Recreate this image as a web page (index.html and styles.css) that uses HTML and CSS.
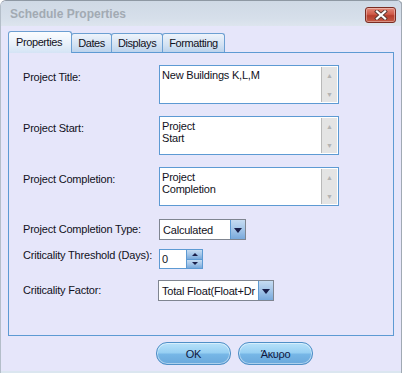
FILE: index.html
```html
<!DOCTYPE html>
<html lang="en">
<head>
  <meta charset="UTF-8">
  <title>Schedule Properties</title>
  <link rel="stylesheet" href="styles.css">
</head>
<body>
  <div class="janela">
    <div class="titulo">
      <span class="titulo-texto">Schedule Properties</span>
      <button class="fechar" title="Close">
        <svg width="16" height="10" viewBox="0 0 16 10">
          <path d="M4 1.5 L12 8.5 M12 1.5 L4 8.5" stroke="#5a3a34" stroke-width="4" stroke-linecap="square"/>
          <path d="M4 1.5 L12 8.5 M12 1.5 L4 8.5" stroke="#ffffff" stroke-width="2.2" stroke-linecap="square"/>
        </svg>
      </button>
    </div>

    <div class="cliente">
      <div class="abas">
        <div class="aba ativa">Properties</div>
        <div class="aba">Dates</div>
        <div class="aba">Displays</div>
        <div class="aba">Formatting</div>
      </div>

      <div class="painel">
        <div class="linha topo">
          <label>Project Title:</label>
          <div class="caixa">
            <div class="caixa-texto">New Buildings K,L,M</div>
            <div class="rolagem"><span>&#9650;</span><span>&#9660;</span></div>
          </div>
        </div>

        <div class="linha topo">
          <label>Project Start:</label>
          <div class="caixa">
            <div class="caixa-texto">Project<br>Start</div>
            <div class="rolagem"><span>&#9650;</span><span>&#9660;</span></div>
          </div>
        </div>

        <div class="linha topo">
          <label>Project Completion:</label>
          <div class="caixa">
            <div class="caixa-texto">Project<br>Completion</div>
            <div class="rolagem"><span>&#9650;</span><span>&#9660;</span></div>
          </div>
        </div>

        <div class="linha tipo">
          <label>Project Completion Type:</label>
          <div class="combo combo-curto">
            <span class="combo-texto">Calculated</span>
            <span class="seta"><i></i></span>
          </div>
        </div>

        <div class="linha limite">
          <label class="sobe">Criticality Threshold (Days):</label>
          <div class="spin">
            <span class="spin-valor">0</span>
            <span class="spin-botoes">
              <span class="spin-btn"><i class="cima"></i></span>
              <span class="spin-btn"><i class="baixo"></i></span>
            </span>
          </div>
        </div>

        <div class="linha fator">
          <label>Criticality Factor:</label>
          <div class="combo combo-longo">
            <span class="combo-texto">Total Float(Float+Dr</span>
            <span class="seta"><i></i></span>
          </div>
        </div>
      </div>

      <div class="botoes">
        <button class="botao">OK</button>
        <button class="botao">Άκυρο</button>
      </div>
    </div>
    <div class="rodape"></div>
  </div>
</body>
</html>
```

FILE: styles.css
```css
body {
  margin: 0;
  background-color: #ffffff;
  font-family: "Liberation Sans", Arial, sans-serif;
  font-size: 11px;
  color: #111122;
}
.janela {
  width: 400px;
  height: 372px;
  background-color: #e6e6fa;
  border-top: 1px solid #8e98a3;
  border-left: 1px solid #b4bec9;
  border-right: 2px solid #a0a9b3;
  border-radius: 6px 6px 0 0;
  overflow: hidden;
  display: flex;
  flex-direction: column;
}
.titulo {
  flex-shrink: 0;
  height: 25px;
  display: flex;
  align-items: center;
  justify-content: space-between;
  padding: 0 5px 0 9px;
  background: linear-gradient(#cfd9e5, #d6dfea 70%, #dde5ee);
}
.titulo-texto {
  font-size: 12px;
  font-weight: bold;
  color: #a2aab3;
  margin-top: 1px;
}
.fechar {
  width: 31px;
  height: 16px;
  margin-top: 2px;
  padding: 0;
  border: 1px solid #7a2c22;
  border-radius: 3px;
  background: linear-gradient(#e2897a, #cf5a48 45%, #b63d2c 55%, #c45a45);
  display: flex;
  align-items: center;
  justify-content: center;
  box-shadow: inset 0 0 0 1px rgba(255,255,255,0.35);
}
.cliente {
  flex: 1;
  padding: 6px 7px 0 7px;
  display: flex;
  flex-direction: column;
}
.abas {
  flex-shrink: 0;
  height: 20px;
  display: flex;
  align-items: flex-end;
  position: relative;
  z-index: 1;
}
.aba {
  height: 18px;
  padding: 0 6px;
  border: 1px solid #6c9fd2;
  border-bottom: none;
  border-radius: 3px 3px 0 0;
  background: linear-gradient(#eef3fb, #d3e2f3 60%, #bcd3ec);
  letter-spacing: -0.4px;
  line-height: 19px;
  margin-left: -1px;
}
.aba.ativa {
  height: 21px;
  margin-left: 0;
  margin-bottom: -1px;
  padding: 0 9px 0 7px;
  line-height: 21px;
  background: linear-gradient(#fbfdff, #e9f1fa 55%, #d4e4f5);
}
.painel {
  box-sizing: border-box;
  flex-shrink: 0;
  height: 284px;
  border: 1px solid #5d9ad3;
  padding: 12px 0 0 14px;
  display: flex;
  flex-direction: column;
}
.linha {
  display: flex;
}
.linha label {
  width: 136px;
  letter-spacing: -0.2px;
  line-height: 13px;
}
.linha.topo {
  margin-bottom: 12px;
}
.linha.topo label {
  padding-top: 6px;
}
.linha.tipo,
.linha.limite,
.linha.fator {
  align-items: center;
}
.linha.tipo {
  margin-top: 1px;
  margin-bottom: 9px;
}
.linha.limite {
  margin-bottom: 11px;
}
.sobe {
  margin-top: -8px;
}
.caixa {
  width: 178px;
  height: 37px;
  border: 1px solid #5d9ad3;
  background-color: #ffffff;
  display: flex;
}
.caixa-texto {
  flex: 1;
  padding: 3px 2px;
  line-height: 12px;
  letter-spacing: -0.2px;
}
.rolagem {
  width: 15px;
  margin: 1px 1px 1px 0;
  border-left: 1px solid #b9b9b9;
  background-color: #e4e4e4;
  color: #b3b3b3;
  font-size: 7px;
  display: flex;
  flex-direction: column;
  justify-content: space-between;
  align-items: center;
  padding: 5px 0 4px;
}
.combo {
  height: 19px;
  border: 1px solid #7f8590;
  background-color: #ffffff;
  display: flex;
  align-items: center;
  overflow: hidden;
}
.combo-curto {
  width: 85px;
}
.combo-longo {
  width: 114px;
  margin-left: -1px;
}
.combo-texto {
  flex: 1;
  padding-left: 3px;
  white-space: nowrap;
  letter-spacing: -0.2px;
}
.seta,
.spin-btn {
  background: linear-gradient(#c6dcf2, #a3c5e8 50%, #78a9dc);
  border: 1px solid #5d9ad3;
  display: flex;
  align-items: center;
  justify-content: center;
}
.seta {
  width: 14px;
  height: 19px;
  margin-right: -1px;
}
.seta i {
  width: 0;
  height: 0;
  border-left: 4px solid transparent;
  border-right: 4px solid transparent;
  border-top: 5px solid #1a1f4a;
  margin-top: 2px;
}
.spin {
  display: flex;
  height: 20px;
}
.spin-valor {
  width: 24px;
  border: 1px solid #5d9ad3;
  background-color: #ffffff;
  padding-left: 2px;
  line-height: 18px;
}
.spin-botoes {
  width: 16px;
  display: flex;
  flex-direction: column;
}
.spin-btn {
  flex: 1;
  border-width: 1px 1px 0 1px;
  margin-left: -1px;
}
.spin-btn:last-child {
  border-bottom-width: 1px;
}
.spin-btn i {
  width: 0;
  height: 0;
  border-left: 3px solid transparent;
  border-right: 3px solid transparent;
}
.spin-btn .cima {
  border-bottom: 3px solid #1a1f4a;
}
.spin-btn .baixo {
  border-top: 3px solid #1a1f4a;
}
.botoes {
  display: flex;
  gap: 7px;
  padding: 6px 0 0 148px;
}
.botao {
  width: 75px;
  height: 23px;
  border: 1px solid #4f8fc7;
  border-radius: 11px;
  background: linear-gradient(#b8e2fa, #98d0f3 45%, #76b6e6 55%, #6aa8dc);
  box-shadow: inset 0 0 0 1px rgba(255,255,255,0.45);
  font-family: "Liberation Sans", Arial, sans-serif;
  font-size: 11px;
  letter-spacing: -0.3px;
  color: #10183f;
  padding: 0;
}
.rodape {
  flex-shrink: 0;
  height: 2px;
  margin-top: auto;
  background-color: #dbe6f0;
}
```
